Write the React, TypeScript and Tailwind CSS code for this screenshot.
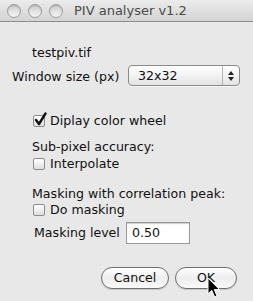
import React from 'react';

function Light() {
  return (
    <div className="w-[14px] h-[14px] rounded-full border border-[#9d9d9d] bg-gradient-to-b from-[#c9c9c9] via-[#e2e2e2] to-[#f4f4f4] shadow-[inset_0_1px_1px_rgba(0,0,0,0.15)]" />
  );
}

function CheckBox({ checked }: { checked?: boolean }) {
  return (
    <div className="relative w-[12px] h-[12px] rounded-[2px] border border-[#8c8c8c] bg-gradient-to-b from-white via-[#f0f0f0] to-[#dcdcdc] shrink-0">
      {checked && (
        <svg className="absolute -top-[4px] left-[0px]" width="13" height="14" viewBox="0 0 13 14">
          <path d="M2 8 L5 12 L11.5 1.5" fill="none" stroke="#111" strokeWidth="2.4" strokeLinecap="round" strokeLinejoin="round" />
        </svg>
      )}
    </div>
  );
}

function CheckRow({ label, checked }: { label: string; checked?: boolean }) {
  return (
    <div className="flex items-center h-[16px] pl-[33px]">
      <CheckBox checked={checked} />
      <span className="ml-[5px]">{label}</span>
    </div>
  );
}

function PillButton({ label, width }: { label: string; width: string }) {
  return (
    <div
      className={`${width} h-[22px] rounded-full border border-[#6f6f6f] bg-gradient-to-b from-white via-[#ededed] to-[#fafafa] shadow-[0_1px_1px_rgba(0,0,0,0.15)] flex items-center justify-center text-[#111]`}
    >
      {label}
    </div>
  );
}

export default function App() {
  return (
    <div className="relative w-[253px] h-[301px] overflow-hidden bg-[#e8e8e8] text-[12.6px] leading-[16px] text-[#111] font-['DejaVu_Sans',sans-serif]">
      {/* title bar */}
      <div className="h-[22px] flex items-center pl-[7px] border-b border-[#8e8e8e] bg-gradient-to-b from-[#ececec] to-[#d3d3d3]">
        <div className="flex gap-[7px]">
          <Light />
          <Light />
          <Light />
        </div>
        <span className="ml-[11px] text-[13px] text-[#4a4a4a]">PIV analyser v1.2</span>
      </div>

      <div className="flex flex-col">
        <div className="mt-[23px] pl-[32px]">testpiv.tif</div>

        <div className="mt-[4px] flex items-start pl-[12px]">
          <span className="mt-[4px] w-[116px] shrink-0">Window size (px)</span>
          <div className="w-[112px] h-[21px] rounded-[4px] border border-[#8a8a8a] bg-gradient-to-b from-white via-[#f3f3f3] to-[#e2e2e2] flex items-center shadow-[0_1px_0_rgba(255,255,255,0.6)]">
            <span className="pl-[9px] flex-1">32x32</span>
            <div className="w-[17px] h-full border-l border-[#b4b4b4] flex flex-col items-center justify-center gap-[2px]">
              <svg width="6" height="4" viewBox="0 0 6 4"><path d="M3 0 L6 4 L0 4 Z" fill="#222" /></svg>
              <svg width="6" height="4" viewBox="0 0 6 4"><path d="M0 0 L6 0 L3 4 Z" fill="#222" /></svg>
            </div>
          </div>
        </div>

        <div className="mt-[27px]">
          <CheckRow label="Diplay color wheel" checked />
        </div>

        <div className="mt-[10px] pl-[32px]">Sub-pixel accuracy:</div>
        <div className="mt-[1px]">
          <CheckRow label="Interpolate" />
        </div>

        <div className="mt-[14px] pl-[32px]">Masking with correlation peak:</div>
        <div>
          <CheckRow label="Do masking" />
        </div>

        <div className="mt-[4px] flex items-center pl-[34px]">
          <span className="w-[92px] shrink-0">Masking level</span>
          <div className="w-[64px] h-[22px] border border-[#9a9a9a] bg-white flex items-center pl-[5px] shadow-[inset_0_1px_1px_rgba(0,0,0,0.2)]">
            0.50
          </div>
        </div>

        <div className="mt-[23px] flex justify-end gap-[6px] pr-[16px]">
          <PillButton label="Cancel" width="w-[68px]" />
          <PillButton label="OK" width="w-[62px]" />
        </div>
      </div>

      {/* mouse pointer */}
      <svg className="absolute left-[207px] top-[277px]" width="14" height="22" viewBox="0 0 14 22">
        <path
          d="M1 1 L1 17 L4.8 13.4 L7.6 20 L10 19 L7.3 12.6 L12.5 12.6 Z"
          fill="#000"
          stroke="#fff"
          strokeWidth="1"
          strokeLinejoin="round"
        />
      </svg>
    </div>
  );
}
